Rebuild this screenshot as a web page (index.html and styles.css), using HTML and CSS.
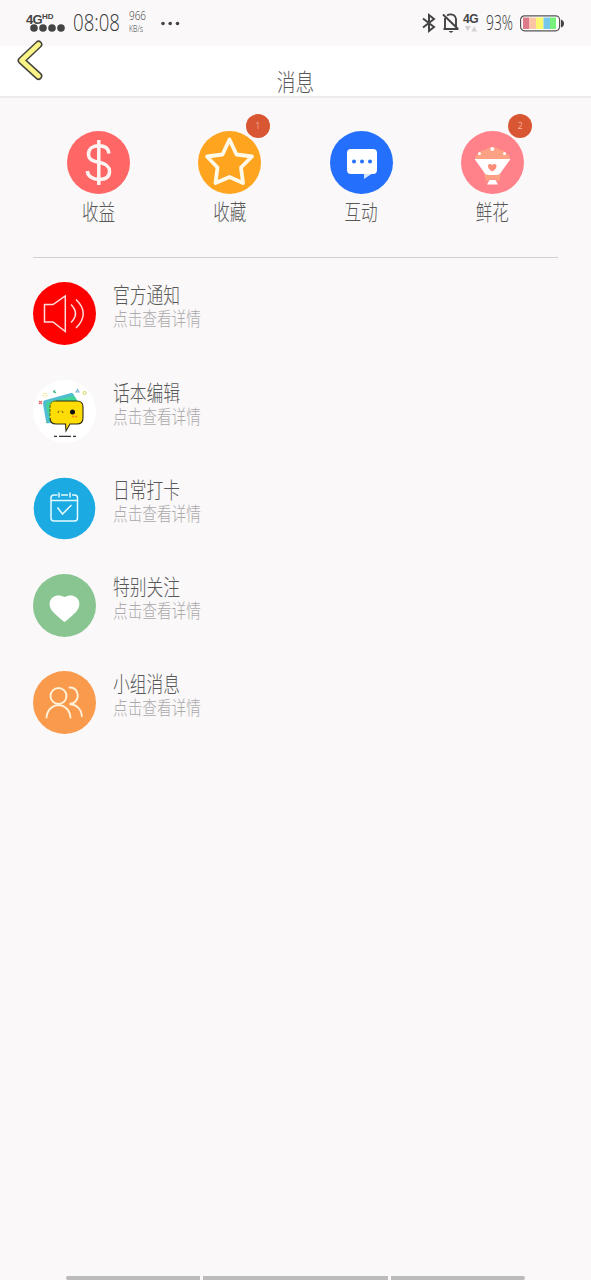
FILE: index.html
```html
<!DOCTYPE html>
<html lang="zh-CN">
<head>
<meta charset="utf-8">
<title>消息</title>
<link rel="stylesheet" href="styles.css">
</head>
<body>
<div class="screen">
  <div class="status">
    <div class="signal">
      <div class="net"><b>4G</b><b class="hd">HD</b></div>
      <svg width="36" height="8" viewBox="0 0 36 8" fill="#444"><circle cx="4" cy="4" r="3.8"/><circle cx="13" cy="4" r="3.8"/><circle cx="22" cy="4" r="3.8"/><circle cx="31" cy="4" r="3.8"/></svg>
    </div>
    <svg class="clock" width="50" height="46"><text x="0" y="31" textLength="47" lengthAdjust="spacingAndGlyphs">08:08</text></svg>
    <svg class="speed" width="20" height="46"><text class="rate" x="0" y="20" textLength="17" lengthAdjust="spacingAndGlyphs">966</text><text class="unit" x="0" y="32" textLength="14" lengthAdjust="spacingAndGlyphs">KB/s</text></svg>
    <svg class="more" width="20" height="46" fill="#444"><circle cx="2" cy="23.500" r="1.800"/><circle cx="9.200" cy="23.500" r="1.800"/><circle cx="16.500" cy="23.500" r="1.800"/></svg>
    <svg class="bt" width="14" height="20" viewBox="0 0 14 20" fill="none" stroke="#444" stroke-width="2"><path d="M1 5.500 12 14l-5 4V2l5 4L1 14.500"/></svg>
    <svg class="bell" width="18" height="20" viewBox="0 0 18 20" fill="none" stroke="#444" stroke-width="1.900"><path d="M1 1.500 16 16M3 5v11H1.500h15M5 2.500Q8 .5 11.500 2 14 3.500 14 6v7.500"/><path d="M6.500 18h5l-2.500 2z" fill="#444" stroke="none"/></svg>
    <div class="cell"><b>4G</b><svg width="12" height="6" viewBox="0 0 12 6" fill="#d2d0d1"><path d="M0 0h5.500L2.700 5.500zM6.500 5.500H12L9.200 0z"/></svg></div>
    <svg class="pct" width="29" height="46"><text x="0" y="30" textLength="27" lengthAdjust="spacingAndGlyphs">93%</text></svg>
    <svg class="battery" width="45" height="17" viewBox="0 0 45 17"><rect x=".6" y=".8" width="39" height="15" rx="4" fill="#fff" stroke="#555" stroke-width="1.200"/><path fill="#de7b8a" d="M3 2.500h6.500v11.500H3z"/><path fill="#fbc5a6" d="M9.500 2.500H16v11.500H9.500z"/><path fill="#fcf76f" d="M16 2.500h7.500v11.500H16z"/><path fill="#76c8ea" d="M23.500 2.500H30v11.500h-6.500z"/><path fill="#77f17b" d="M30 2.500h6v11.500h-6z"/><path fill="#444" d="M41 4.500q3 1 3 4t-3 4z"/></svg>
  </div>

  <header class="header">
    <svg class="back" width="30" height="44" viewBox="0 0 30 44" fill="none" stroke-linecap="round" stroke-linejoin="round"><path d="M21.500 5.500 4.500 21.500 21.500 37" stroke="#45453f" stroke-width="7.800"/><path d="M21.500 5.500 4.500 21.500 21.500 37" stroke="#fbf486" stroke-width="4.800"/></svg>
    <h1 class="title">消息</h1>
  </header>

  <nav class="tabs">
    <a class="tab">
      <svg class="disc" viewBox="0 0 63 63"><circle cx="31.500" cy="31.500" r="31.500" fill="#ff6666"/><g fill="none" stroke="#fff4f2" stroke-width="3.500"><path d="M31.800 9v45" /><path d="M42 22.500C41.500 17 37.500 14.800 31.800 14.800S21.500 17.500 21.500 23s4 7 10.300 8.300S42.500 34.500 42.500 40.500s-5 8-10.700 8-11-3-11.500-8.500"/></g></svg>
      <span class="label">收益</span>
    </a>
    <a class="tab">
      <svg class="disc" viewBox="0 0 63 63"><circle cx="31.500" cy="31.500" r="31.500" fill="#fea41e"/><path d="M31.500 8.500 38.500 23.500 54 25.500 43 36.500 45 52 31.500 46 17.500 52 19.500 36.500 9 25.500 24.500 23.500z" fill="none" stroke="#fff9ea" stroke-width="3.800" stroke-linejoin="round"/></svg>
      <span class="badge">1</span>
      <span class="label">收藏</span>
    </a>
    <a class="tab">
      <svg class="disc" viewBox="0 0 63 63"><circle cx="31.500" cy="31.500" r="31.500" fill="#2470fc"/><path d="M21 18h22q4 0 4 4v17q0 4-4 4H21q-4 0-4-4V22q0-4 4-4z" fill="#fff"/><path d="M34 43h7.500L34 48z" fill="#d3e5ff"/><g fill="#2470fc"><circle cx="24" cy="30.500" r="2"/><circle cx="32" cy="30.500" r="2"/><circle cx="40" cy="30.500" r="2"/></g></svg>
      <span class="label">互动</span>
    </a>
    <a class="tab">
      <svg class="disc" viewBox="0 0 63 63"><circle cx="31.500" cy="31.500" r="31.500" fill="#ff828a"/><path d="M14 28q0-4 4-6 2-3 6-3 3-3 7.500-3t7.500 3q4 0 6 3 4 2 4 6z" fill="#fda184"/><g fill="#fff"><path d="M13.500 28h36L38 44H25z"/><path d="M28.500 49h6l2.500 4.500H26z"/><circle cx="31.300" cy="18" r="2"/><circle cx="18.500" cy="22.500" r="1.500"/><circle cx="43.500" cy="22.500" r="1.500"/></g><path d="M23 43q4.500 1.500 8.500 1 4 .5 8.500-1l-2 7.500-4-2h-5l-4 2z" fill="#fda184"/><path d="M31.300 40.500C24 36 27.500 30.500 31.300 34c3.800-3.500 7.300 2 0 6.500z" fill="#fc8d78"/></svg>
      <span class="badge">2</span>
      <span class="label">鲜花</span>
    </a>
  </nav>

  <ul class="list">
    <li class="row">
      <svg class="disc" viewBox="0 0 63 63"><circle cx="31.500" cy="31.500" r="31.500" fill="#fe0000"/><g fill="none" stroke="#ffdcdc" stroke-width="1.500"><path d="M11.500 22.500h8.500l12.300-8.500v35.500L20 40h-8.500z"/><path d="M38 22.500q9 9 0 18M43 17.500q14.500 14 0 28.500"/></g></svg>
      <div class="info"><div class="name">官方通知</div><div class="hint">点击查看详情</div></div>
    </li>
    <li class="row">
      <svg class="disc" viewBox="0 0 63 63"><circle cx="31.500" cy="31.500" r="31.500" fill="#fff"/><path d="M11 20.500 38 13q2-.5 3 2l3 11-27 17q-3 1-4-2L10 24q0-3 1-3.500z" fill="#51bdd2"/><path d="M14 22.500 39 16q3-.5 4 2l3 9-26 16q-2 1-3-2l-4-15q0-3 1-3.500z" fill="#43d497"/><path d="M23 21h21q6 0 6 6v11q0 6-6 6h-7l-4 7-.5-7H23q-6 0-6-6V27q0-6 6-6z" fill="#fddd05"/><path d="M23 21h21q6 0 6 6v11q0 6-6 6h-7l-4 7-.5-7H23q-6 0-6-6" fill="none" stroke="#302c16" stroke-width="1.100"/><path d="M17 36v-9q0-6 6-6M25 33q0-2 1.500-2m2 0q1.500 0 1.500 2" fill="none" stroke="#6c5b10" stroke-width="1" stroke-dasharray="3 1"/><circle cx="39.500" cy="32" r="2.500" fill="#111"/><path d="m39 36 2 1m1-1 2 1" stroke="#f48b20" stroke-width="1.500"/><path d="M21 56.300h3m2 0h12m2 0h3" stroke="#333" stroke-width="1.200"/><g fill="none" stroke-width="1.200"><path d="m6 21 3 3m0-3-3 3" stroke="#e66a6a"/><path d="m20 11 3 2m-1-3-1 3M13 42l2 1" stroke="#55bd8c"/><circle cx="12" cy="15" r="1.800" stroke="#e6dc78" stroke-dasharray="1 1"/><circle cx="51.500" cy="13" r="1.500" stroke="#d9df75"/><path d="m43 12 1.500-2.500L46 12z" stroke="#89bed8"/></g></svg>
      <div class="info"><div class="name">话本编辑</div><div class="hint">点击查看详情</div></div>
    </li>
    <li class="row">
      <svg class="disc" viewBox="0 0 63 63"><circle cx="31.500" cy="31.500" r="30.800" fill="#1baae2"/><g fill="none" stroke="#e6fbff" stroke-width="1.500"><path d="M24.500 18H21q-3 0-3 3v20q0 3 3 3h20.500q3 0 3-3V21q0-3-3-3H39M28 18h7M18 23.500h26.500M26 15.500v5M37 15.500v5M24.500 30.500l5 6.500L38.500 28"/></g></svg>
      <div class="info"><div class="name">日常打卡</div><div class="hint">点击查看详情</div></div>
    </li>
    <li class="row">
      <svg class="disc" viewBox="0 0 63 63"><circle cx="31.500" cy="31.500" r="31.500" fill="#88c591"/><path d="M31.500 48q-2-1-11-9.500c-5-5-5-11.500-1-15 3.500-3 8.500-2.500 12-.5 3.500-2 8.500-2.500 12 .5 4 3.500 4 10-1 15q-9 8.500-11 9.500z" fill="#fff"/></svg>
      <div class="info"><div class="name">特别关注</div><div class="hint">点击查看详情</div></div>
    </li>
    <li class="row">
      <svg class="disc" viewBox="0 0 63 63"><circle cx="31.500" cy="31.500" r="31.500" fill="#fa9a4d"/><g fill="none" stroke="#fff2d8" stroke-width="1.900" stroke-linecap="round"><circle cx="25.500" cy="25" r="8"/><path d="M13.500 46.500C15 30 36 30 37.500 46.500M36.500 16.500c10-1 12 15.500 0 16.500 7 .5 12 5 12.300 12"/></g></svg>
      <div class="info"><div class="name">小组消息</div><div class="hint">点击查看详情</div></div>
    </li>
  </ul>

  <footer class="navbar"><i class="side left"></i><i class="mid"></i><i class="side right"></i></footer>
</div>
</body>
</html>
```
FILE: styles.css
```css
* { box-sizing: border-box; margin: 0; padding: 0; }
body { background: #faf8f9; font-family: "Noto Sans CJK SC", sans-serif; font-weight: 300; color: #585858; }
.screen { width: 591px; height: 1280px; display: flex; flex-direction: column; overflow: hidden; }
svg { display: block; flex: none; overflow: visible; }
text { font-family: "Open Sans", sans-serif; font-weight: 300; fill: #333; }

.status { height: 46px; display: flex; align-items: center; padding-left: 26px; }
.signal { width: 47px; height: 20px; }
.signal svg { margin-left: 4px; }
.net { display: flex; height: 11px; font: 700 13px/14px "Liberation Sans", sans-serif; color: #444; letter-spacing: -.7px; }
.net .hd { font-size: 8px; line-height: 8px; letter-spacing: 0; }
.clock text { font-size: 23px; }
.speed { margin-left: 6px; }
.speed .rate { font-size: 12px; }
.speed .unit { font-size: 9px; }
.more { margin-left: 12px; }
.bt { margin-left: 241px; }
.bell { margin-left: 6px; }
.cell { width: 16px; height: 20px; margin-left: 3px; font: 700 12px/13px "Liberation Sans", sans-serif; color: #444; letter-spacing: -.5px; }
.cell b { display: block; height: 13px; }
.cell svg { margin-left: 2px; }
.pct { margin-left: 7px; }
.pct text { font-size: 20px; }
.battery { margin-left: 5px; }

.header { height: 52px; display: grid; grid-template-columns: 1fr auto 1fr; background: #fff; border-bottom: 2px solid #ececee; }
.back { margin: -7px 0 0 17px; }
.title { margin-top: 22px; font-size: 18.700px; line-height: 26px; font-weight: 300; transform: scaleY(1.27); }

.tabs { display: flex; margin: 33px 33px 0; height: 127px; border-bottom: 1px solid #d3d1d2; }
.tab { flex: 1; position: relative; display: flex; flex-direction: column; align-items: center; }
.disc { width: 63px; height: 63px; }
.label { margin-top: 5px; font-size: 16.600px; line-height: 24px; transform: scaleY(1.27); }
.badge { position: absolute; left: calc(50% + 16px); top: -17px; width: 24px; height: 24px; border-radius: 50%; background: #d95632; color: #fbd9cb; font: 300 9px/24px "Open Sans", sans-serif; text-align: center; }

.list { list-style: none; padding: 24.300px 33px 0; flex: 1; }
.row { display: flex; height: 97.300px; }
.info { margin-left: 17px; padding-top: 4px; }
.name { height: 16px; font-size: 16.800px; line-height: 16px; transform: scaleY(1.26); }
.hint { height: 14px; margin-top: 9px; font-size: 14.650px; line-height: 14px; color: #aba9aa; transform: scaleY(1.28); }

.navbar { display: flex; gap: 3px; height: 4px; padding: 0 66px; }
.navbar i { background: #bbb; }
.side { width: 134px; }
.left { border-radius: 2px 0 0 2px; }
.mid { width: 185px; }
.right { border-radius: 0 2px 2px 0; }
```
